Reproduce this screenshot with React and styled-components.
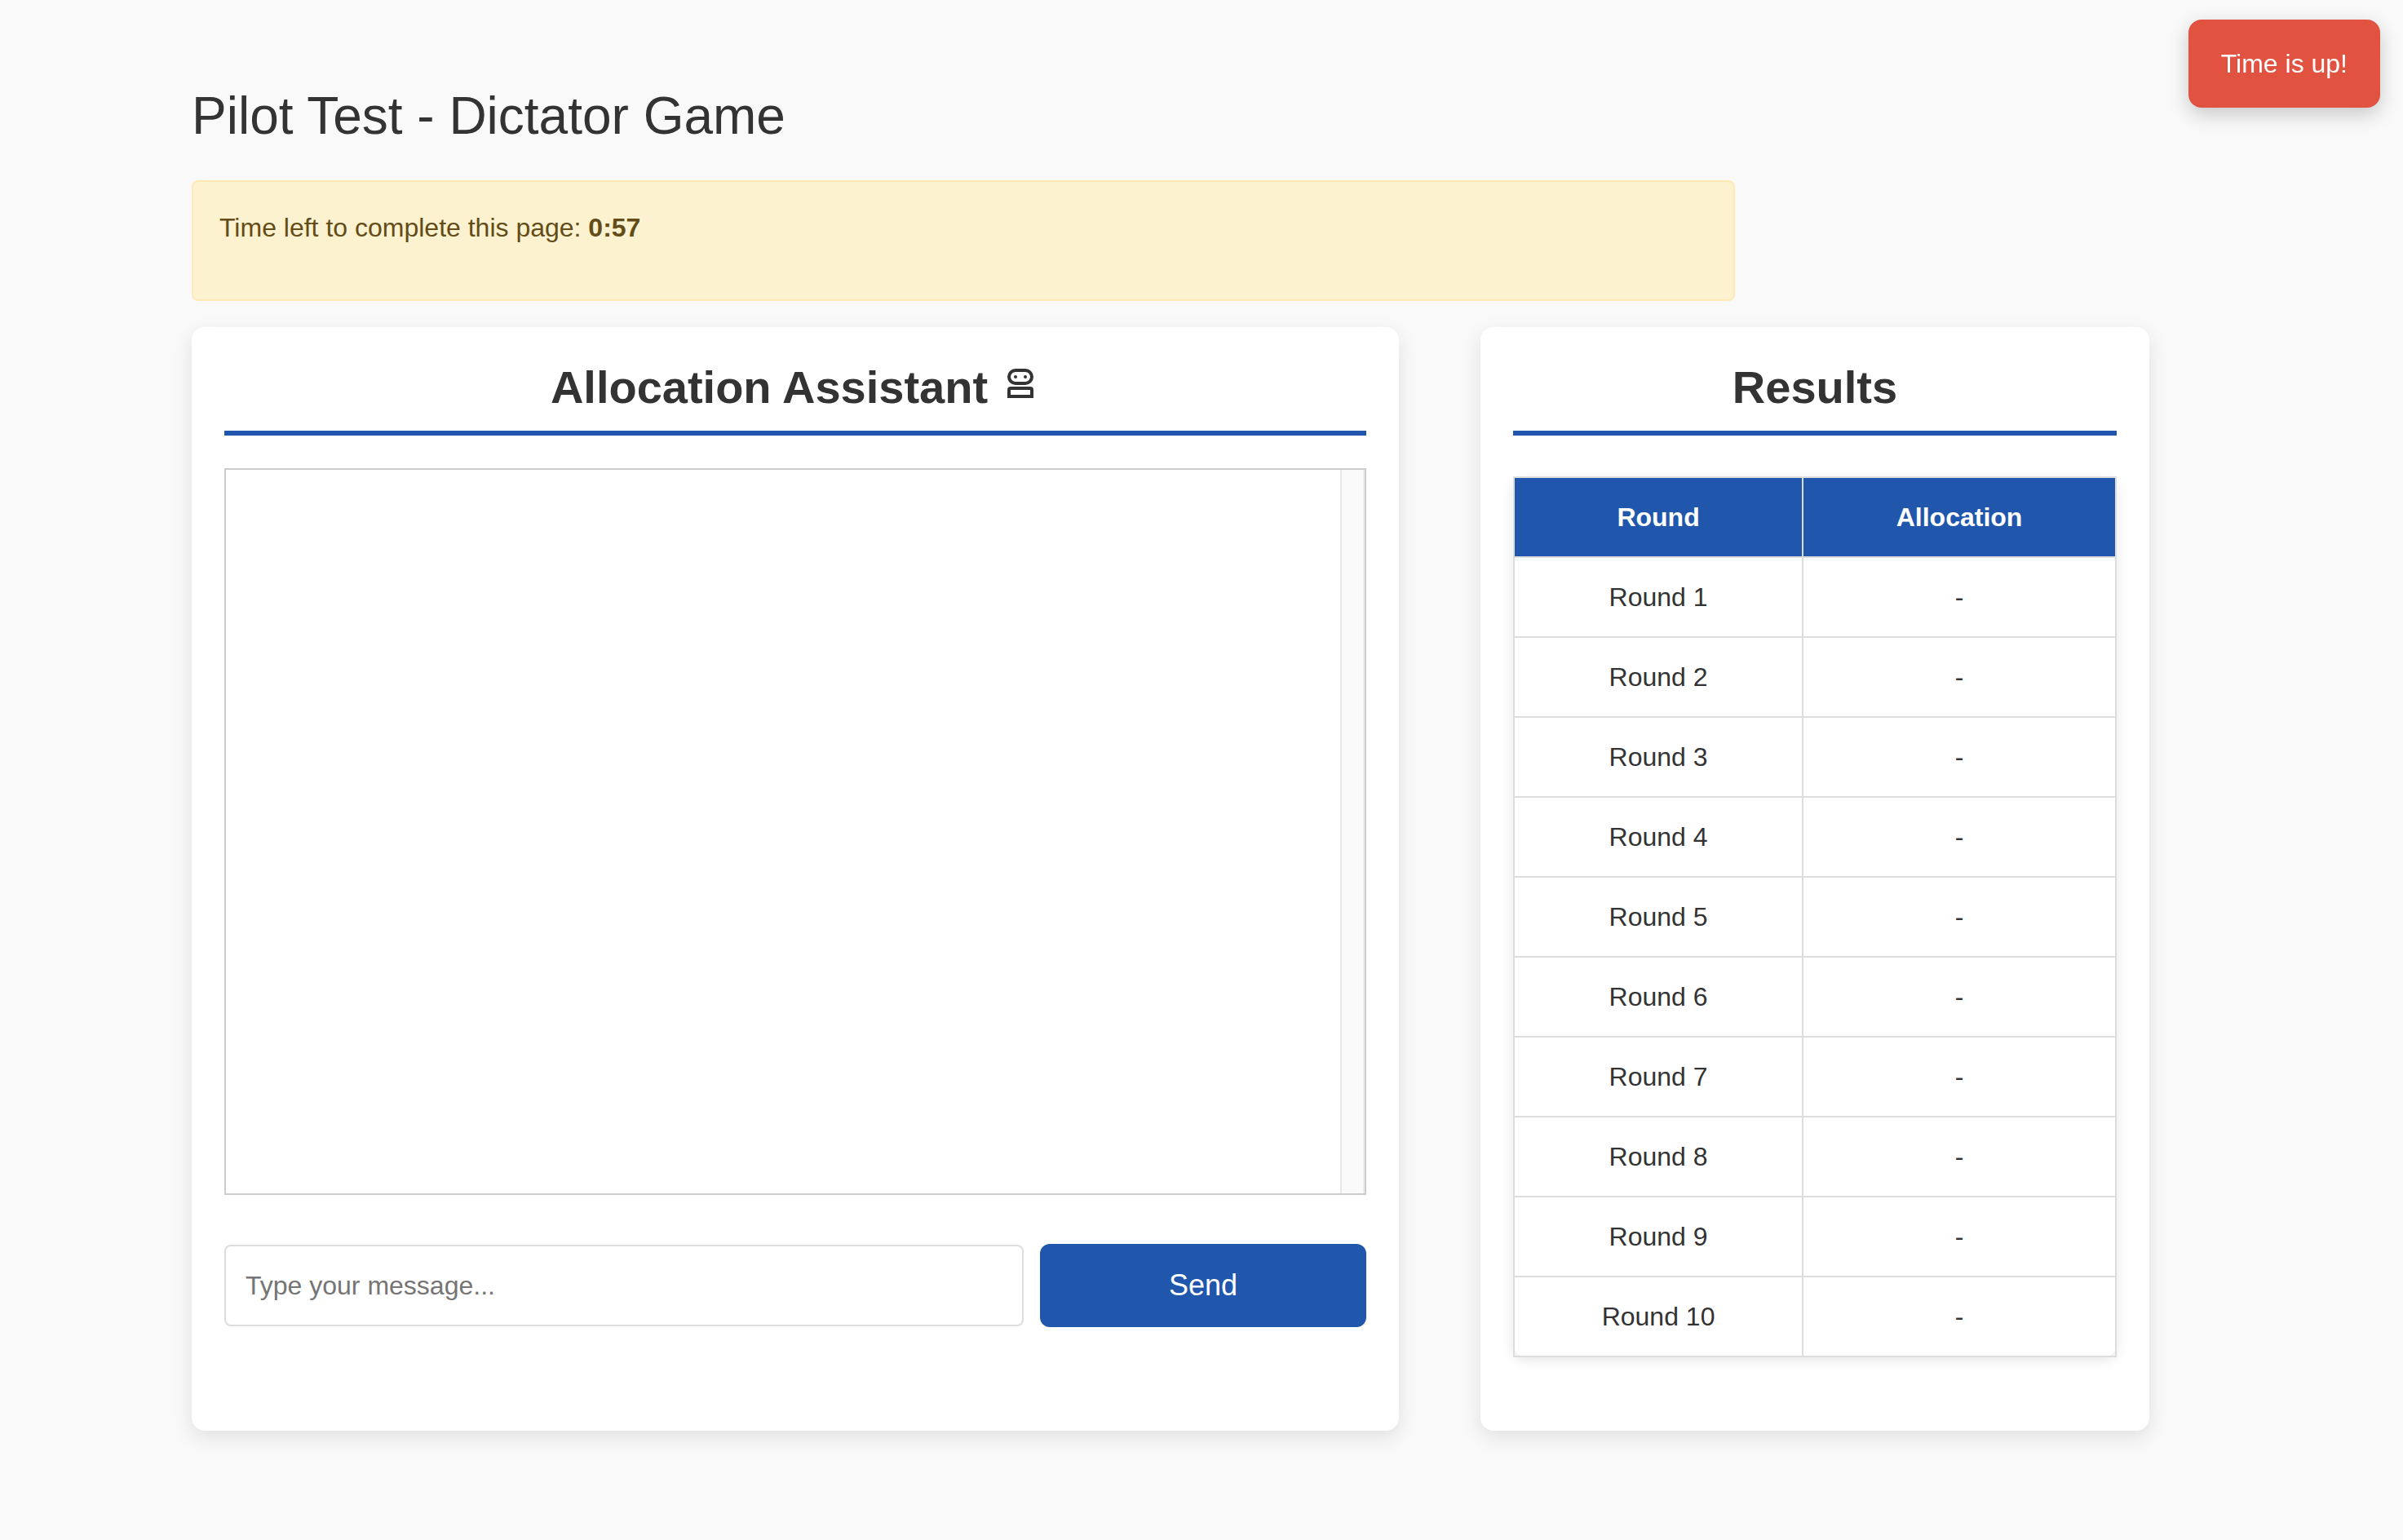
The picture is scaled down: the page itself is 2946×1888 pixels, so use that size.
import React, { useState } from "react";
import styled, { createGlobalStyle } from "styled-components";

const GlobalStyle = createGlobalStyle`
  *, *::before, *::after { box-sizing: border-box; }
  body {
    margin: 0;
    background: #f9f9f9;
    color: #333;
    font-family: "Liberation Sans", Arial, sans-serif;
    font-size: 32px;
    line-height: 48px;
  }
`;

const Page = styled.main`
  padding: 104px 235px;
`;

const Title = styled.h1`
  margin: 0 0 40px;
  font-size: 64px;
  font-weight: 400;
  line-height: 77px;
`;

const Timer = styled.div`
  max-width: 1892px;
  margin-bottom: 32px;
  padding: 32px 32px 64px;
  border: 2px solid #ffeab6;
  border-radius: 8px;
  background: #fdf2d0;
  color: #634c17;
`;

const Panels = styled.div`
  display: grid;
  grid-template-columns: 1480fr 820fr;
  gap: 100px;
  max-width: 2400px;
`;

const Panel = styled.section`
  display: flex;
  flex-direction: column;
  min-width: 0;
  padding: 40px;
  border-radius: 16px;
  background: #fff;
  box-shadow: 0 8px 24px rgba(0, 0, 0, 0.1);
`;

const PanelTitle = styled.h2`
  display: flex;
  align-items: center;
  justify-content: center;
  gap: 16px;
  margin: 0 0 40px;
  padding-bottom: 19px;
  border-bottom: 6px solid #2057ac;
  font-size: 56px;
  font-weight: 700;
  line-height: 68px;
`;

const ChatLog = styled.div`
  display: flex;
  justify-content: flex-end;
  flex: 1;
  min-height: 400px;
  border: 2px solid #ccc;
`;

const ScrollTrack = styled.div`
  width: 30px;
  border-left: 2px solid #e8e8e8;
  border-right: 2px solid #ededed;
  background: #fafafa;
`;

const MessageForm = styled.form`
  display: flex;
  align-items: center;
  gap: 20px;
  margin: 60px 0 87px;
`;

const MessageInput = styled.input`
  flex: 1;
  min-width: 0;
  height: 100px;
  padding: 0 24px;
  border: 2px solid #ddd;
  border-radius: 8px;
  background: #fff;
  color: #333;
  font: inherit;
  &::placeholder { color: #757575; }
`;

const SendButton = styled.button`
  width: 400px;
  height: 102px;
  border: 0;
  border-radius: 12px;
  background: #2057ac;
  color: #fff;
  font-family: inherit;
  font-size: 36px;
`;

const ResultsTable = styled.table`
  width: 100%;
  margin: 10px 0 50px;
  border-collapse: collapse;
  border-radius: 16px;
  box-shadow: 0 4px 16px rgba(0, 0, 0, 0.1);
  text-align: center;
`;

const HeadCell = styled.th`
  padding: 24px;
  border: 2px solid #ddd;
  background: #2057ac;
  color: #fff;
`;

const Cell = styled.td`
  padding: 24px;
  border: 2px solid #ddd;
`;

const Toast = styled.div`
  position: fixed;
  top: 24px;
  right: 28px;
  padding: 30px 40px;
  border-radius: 16px;
  background: #e15241;
  box-shadow: 0 8px 24px rgba(0, 0, 0, 0.2);
  color: #fff;
`;

function RobotIcon() {
  return (
    <svg width="48" height="48" viewBox="-8 -1 48 48" fill="none" stroke="currentColor" strokeWidth="4" aria-hidden="true">
      <rect x="2" y="2" width="28" height="16" rx="8" />
      <circle cx="10" cy="10" r="2" fill="currentColor" stroke="none" />
      <circle cx="22" cy="10" r="2" fill="currentColor" stroke="none" />
      <path
        d="M0 36V26a4 4 0 0 1 4-4h24a4 4 0 0 1 4 4v10zM4 26v6h24v-6z"
        fill="currentColor"
        fillRule="evenodd"
        stroke="none"
      />
    </svg>
  );
}

const rounds = Array.from({ length: 10 }, (_, i) => ({ name: `Round ${i + 1}`, allocation: "-" }));

export default function App() {
  const [message, setMessage] = useState("");
  return (
    <>
      <GlobalStyle />
      <Page>
        <Title>Pilot Test - Dictator Game</Title>
        <Timer>
          Time left to complete this page: <strong>0:57</strong>
        </Timer>
        <Panels>
          <Panel>
            <PanelTitle>
              Allocation Assistant
              <RobotIcon />
            </PanelTitle>
            <ChatLog>
              <ScrollTrack />
            </ChatLog>
            <MessageForm onSubmit={(e) => e.preventDefault()}>
              <MessageInput
                type="text"
                aria-label="Message"
                placeholder="Type your message..."
                value={message}
                onChange={(e) => setMessage(e.target.value)}
              />
              <SendButton type="submit">Send</SendButton>
            </MessageForm>
          </Panel>
          <Panel>
            <PanelTitle>Results</PanelTitle>
            <ResultsTable>
              <thead>
                <tr>
                  <HeadCell scope="col">Round</HeadCell>
                  <HeadCell scope="col">Allocation</HeadCell>
                </tr>
              </thead>
              <tbody>
                {rounds.map((round) => (
                  <tr key={round.name}>
                    <Cell>{round.name}</Cell>
                    <Cell>{round.allocation}</Cell>
                  </tr>
                ))}
              </tbody>
            </ResultsTable>
          </Panel>
        </Panels>
      </Page>
      <Toast role="alert">Time is up!</Toast>
    </>
  );
}
